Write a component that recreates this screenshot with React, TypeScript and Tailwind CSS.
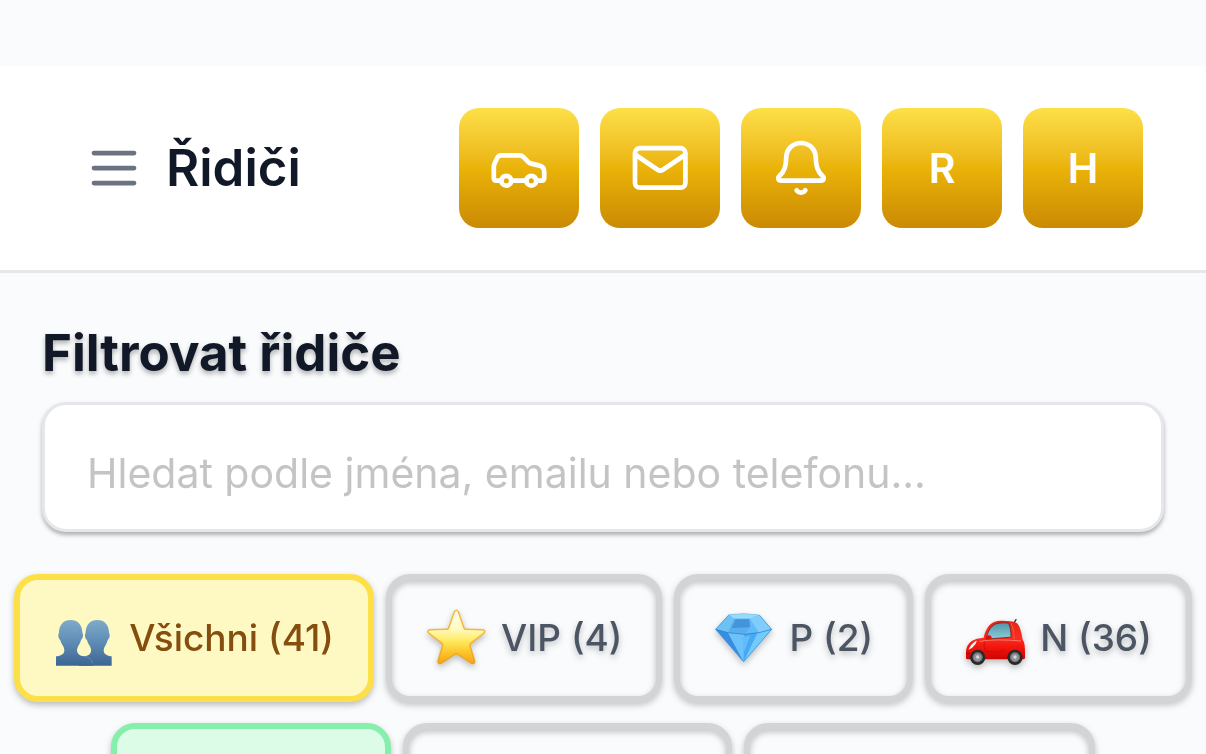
import type { ReactNode } from 'react';

const stroke = {
  fill: 'none',
  stroke: 'currentColor',
  strokeLinecap: 'round' as const,
  strokeLinejoin: 'round' as const,
};

function MenuIcon() {
  return (
    <svg viewBox="0 0 24 24" className="size-15" {...stroke} strokeWidth="1.9" aria-hidden="true">
      <path d="M4 6h16M4 12h16M4 18h16" />
    </svg>
  );
}

function CarIcon() {
  return (
    <svg viewBox="0 0 60 60" className="size-15" {...stroke} strokeWidth="4.7" aria-hidden="true">
      <path d="M12.4 42.7H7.5C5.7 42.7 4.8 41.8 4.8 40V29.5C4.8 27.5 5.2 26.2 6 24.5L8.2 20C9 18.2 10.2 17.4 12 17.4H30C32 17.4 33.3 17.9 34.6 19.2L39.4 24.1C40.3 25 41 25.4 42.2 25.6L49.8 27.4C53.5 28.3 55.2 30 55.2 33.4V40C55.2 41.8 54.4 42.7 52.6 42.7H47.2M37.4 42.7H22.2" />
      <circle cx="17.3" cy="42.7" r="4.9" />
      <circle cx="42.3" cy="42.7" r="4.9" />
    </svg>
  );
}

function MailIcon() {
  return (
    <svg viewBox="0 0 60 60" className="size-15" {...stroke} strokeWidth="4.7" aria-hidden="true">
      <rect x="5" y="10.1" width="50.4" height="39.6" rx="5" />
      <path d="M5.8 17L27.6 31.7C29.4 32.9 31.2 32.9 33 31.7L54.8 17" />
    </svg>
  );
}

function BellIcon() {
  return (
    <svg viewBox="0 0 60 60" className="size-15" {...stroke} strokeWidth="4.7" aria-hidden="true">
      <path d="M30 5C21.6 5 15.2 11.4 15.2 19.7C15.2 28 14 33.2 8.8 37.6C6.2 40 7.2 42.7 10.2 42.7H49.8C52.8 42.7 53.8 40 51.2 37.6C46 33.2 44.8 28 44.8 19.7C44.8 11.4 38.4 5 30 5Z" />
      <path d="M25.6 52.2C27.4 55.4 32.6 55.4 34.4 52.2" />
    </svg>
  );
}

function PeopleEmoji() {
  return (
    <svg viewBox="18 9 180 180" className="size-15 shrink-0" aria-hidden="true">
      <defs>
        <linearGradient id="people" gradientUnits="userSpaceOnUse" x1="0" y1="45" x2="0" y2="182">
          <stop offset="0" stopColor="#7fabc9" />
          <stop offset="0.5" stopColor="#5d8bb4" />
          <stop offset="1" stopColor="#3c6592" />
        </linearGradient>
      </defs>
      <path
        fill="url(#people)"
        d="M148 45C127 45 114 59 113 80C113 86 110 88 111 94C112 101 115 102 117 106C120 118 128 124 129 132C131 146 122 152 110 154L92 160V182H191V154C178 152 166 148 167 134C168 126 176 118 179 106C182 102 184 100 185 94C186 88 183 86 183 80C182 59 169 45 148 45Z"
      />
      <path
        fill="url(#people)"
        d="M68 45C47 45 34 59 33 80C33 86 30 88 31 94C32 101 35 102 37 106C40 118 48 124 49 134C50 148 38 152 24 154V182H134C132 164 124 156 108 154C96 152 87 147 87 134C88 125 96 118 99 106C101 102 104 100 105 94C106 88 103 86 103 80C102 59 89 45 68 45Z"
      />
      <path d="M108 154C124 156 131 164 134 175" fill="none" stroke="#7f9dbb" strokeWidth="1.6" />
    </svg>
  );
}

function StarEmoji() {
  return (
    <svg viewBox="21 24 180 180" className="size-15 shrink-0" aria-hidden="true">
      <defs>
        <linearGradient id="starFill" x1="0" y1="0" x2="0" y2="1">
          <stop offset="0" stopColor="#fffdf2" />
          <stop offset="0.35" stopColor="#fffac0" />
          <stop offset="0.58" stopColor="#ffe95c" />
          <stop offset="0.8" stopColor="#fbc427" />
          <stop offset="1" stopColor="#f5a315" />
        </linearGradient>
        <linearGradient id="starEdge" x1="0" y1="0" x2="0" y2="1">
          <stop offset="0" stopColor="#f6b83c" />
          <stop offset="0.5" stopColor="#f5b638" />
          <stop offset="1" stopColor="#f0a01a" />
        </linearGradient>
      </defs>
      <path
        fill="url(#starFill)"
        stroke="url(#starEdge)"
        strokeWidth="4.5"
        strokeLinejoin="round"
        d="M106 35Q112 27 118 35L135 84Q136 88 141 88L192 89Q201 92 195 99L155 130Q152 133 153 137L167 184Q167 193 158 190L116 162Q112 160 108 162L66 190Q57 193 57 184L71 137Q72 133 69 130L29 99Q23 92 32 89L83 88Q88 88 89 84Z"
      />
    </svg>
  );
}

function DiamondEmoji() {
  return (
    <svg viewBox="15 24 180 180" className="size-15 shrink-0" aria-hidden="true">
      <path d="M60 44L105 41L151 45L188 88L104 185L20 88Z" fill="#4fb3f5" />
      <path d="M60 44L76 56L57 97L20 88Z" fill="#6cc3f3" />
      <path d="M60 44L105 41L151 45L122 56H76Z" fill="#98dbf9" />
      <path d="M76 56H122L128 100H57Z" fill="#5baeee" />
      <path d="M80 58H120L124 82L68 84Z" fill="#4493dd" />
      <path d="M151 45L188 88L150 98L122 56Z" fill="#80cdfb" />
      <path d="M122 56L150 98L108 102L124 80Z" fill="#62bbf8" />
      <path d="M20 88L57 98L104 185Z" fill="#388de0" />
      <path d="M57 98L106 103L104 185Z" fill="#6cc2fb" />
      <path d="M106 103L146 98L104 185Z" fill="#46a9f5" />
      <path d="M100 112L124 106L104 160Z" fill="#62bcfb" />
      <path d="M146 98L188 88L104 185Z" fill="#74cafc" />
      <path d="M20 88L57 98L106 103L150 98L188 88" fill="none" stroke="#2f7fcb" strokeWidth="2.2" />
      <path d="M60 44L20 88L104 185L188 88L151 45" fill="none" stroke="#2f8ddd" strokeWidth="2" />
      <path d="M60 44L105 41L151 45" fill="none" stroke="#7ac3e4" strokeWidth="2" />
    </svg>
  );
}

function Wheel({ cx }: { cx: number }) {
  return (
    <g>
      <circle cx={cx} cy="157" r="23" fill="#29292b" />
      <circle cx={cx} cy="157" r="15" fill="#77787a" />
      <circle cx={cx} cy="157" r="11" fill="#939496" />
      <circle cx={cx} cy="156" r="5" fill="#d8d8d8" />
    </g>
  );
}

function RedCarEmoji() {
  return (
    <svg viewBox="24 9 180 180" className="size-15 shrink-0" aria-hidden="true">
      <defs>
        <linearGradient id="carBody" x1="0" y1="0" x2="0" y2="1">
          <stop offset="0" stopColor="#e3261c" />
          <stop offset="0.45" stopColor="#fb2d20" />
          <stop offset="0.75" stopColor="#ee1009" />
          <stop offset="1" stopColor="#c90503" />
        </linearGradient>
        <linearGradient id="carGlass" x1="0" y1="0" x2="0" y2="1">
          <stop offset="0" stopColor="#4f97a9" />
          <stop offset="1" stopColor="#8ccbd8" />
        </linearGradient>
      </defs>
      <path d="M169 57L177 44" stroke="#3b2726" strokeWidth="4" strokeLinecap="round" />
      <path
        fill="url(#carBody)"
        d="M27 159V143C27 122 38 107 60 101L80 98C84 78 97 50 122 48C142 46 165 48 178 53C188 58 194 84 197 104C203 112 204 126 204 142V159Q203 163 198 163H32Q27 163 27 159Z"
      />
      <path
        fill="url(#carGlass)"
        stroke="#7d1d18"
        strokeWidth="2.5"
        d="M88 98C93 78 104 58 123 55C136 53 147 53 155 55C160 66 162 80 162 93Q162 97 157 97L104 101Z"
      />
      <ellipse cx="95" cy="99" rx="9" ry="8" fill="#d8130c" />
      <path d="M55 109Q41 118 34 134L45 129Q57 118 60 107Z" fill="#fff4ee" />
      <path d="M82 107Q80 126 84 138Q112 146 146 137" fill="none" stroke="#b80e09" strokeWidth="2" />
      <path d="M163 55Q172 77 172 103" fill="none" stroke="#ff6b5f" strokeWidth="2" />
      <path d="M68 109Q115 101 192 108" fill="none" stroke="#ff7569" strokeWidth="3" />
      <path d="M28 145H40" stroke="#8f1511" strokeWidth="4" />
      <Wheel cx={62} />
      <Wheel cx={174} />
    </svg>
  );
}

function GoldButton({ label, children }: { label: string; children: ReactNode }) {
  return (
    <button
      type="button"
      aria-label={label}
      className="flex size-30 shrink-0 items-center justify-center rounded-[20px] bg-linear-to-b from-[#fde047] via-[#eab308] to-[#ca8a04] text-[41px] leading-none font-semibold text-white"
    >
      {children}
    </button>
  );
}

const tones = {
  gray: 'border-[#d2d5d8] text-[#4b5563]',
  yellow: 'border-[#fde047] bg-[#fef9c3] text-[#854d0e]',
  green: 'border-[#86efac] bg-[#dcfce7] text-[#166534]',
};

function Chip({ tone, width = '', children }: { tone: keyof typeof tones; width?: string; children?: ReactNode }) {
  return (
    <button
      type="button"
      className={`flex h-32 shrink-0 items-center justify-center gap-[15px] rounded-3xl border-6 px-[34px] text-[37px] font-medium whitespace-nowrap drop-shadow-[0_3px_3px_rgba(0,0,0,0.25)] ${tones[tone]} ${width}`}
    >
      {children}
    </button>
  );
}

export default function App() {
  return (
    <div className="h-screen overflow-hidden bg-[#fafbfc] pt-[66px] font-['Inter','Liberation_Sans',sans-serif] text-[#111827]">
      <header className="flex items-center justify-between border-b-3 border-[#e5e7eb] bg-white py-[42px] pr-[63px] pl-[84px]">
        <div className="flex items-center gap-[22px]">
          <button type="button" aria-label="Menu" className="text-[#6b7280]">
            <MenuIcon />
          </button>
          <h1 className="text-[51px] leading-[54px] font-semibold">Řidiči</h1>
        </div>
        <nav className="flex gap-[21px]">
          <GoldButton label="Auto">
            <CarIcon />
          </GoldButton>
          <GoldButton label="Email">
            <MailIcon />
          </GoldButton>
          <GoldButton label="Zvonek">
            <BellIcon />
          </GoldButton>
          <GoldButton label="R">R</GoldButton>
          <GoldButton label="H">H</GoldButton>
        </nav>
      </header>

      <main>
        <section className="px-[42px] pt-[42px]">
          <label
            htmlFor="search"
            className="block text-[51px] leading-[75px] font-bold text-shadow-[0_3px_5px_rgba(0,0,0,0.3)]"
          >
            Filtrovat řidiče
          </label>
          <input
            id="search"
            type="text"
            placeholder="Hledat podle jména, emailu nebo telefonu..."
            className="mt-3 block h-[130px] w-full rounded-3xl border-3 border-[#e5e7eb] bg-white px-[42px] pt-3 text-[41px] outline-none drop-shadow-[0_3px_2px_rgba(0,0,0,0.3)] placeholder:text-[#c4c4c4]"
          />
        </section>

        <section className="flex flex-wrap justify-center gap-x-3 gap-y-[21px] px-3 pt-[42px]">
          <Chip tone="yellow">
            <PeopleEmoji />
            <span>Všichni (41)</span>
          </Chip>
          <Chip tone="gray">
            <StarEmoji />
            <span>VIP (4)</span>
          </Chip>
          <Chip tone="gray">
            <DiamondEmoji />
            <span>P (2)</span>
          </Chip>
          <Chip tone="gray">
            <RedCarEmoji />
            <span>N (36)</span>
          </Chip>
          <Chip tone="green" width="w-[280px]" />
          <Chip tone="gray" width="w-[329px]" />
          <Chip tone="gray" width="w-[351px]" />
        </section>
      </main>
    </div>
  );
}
